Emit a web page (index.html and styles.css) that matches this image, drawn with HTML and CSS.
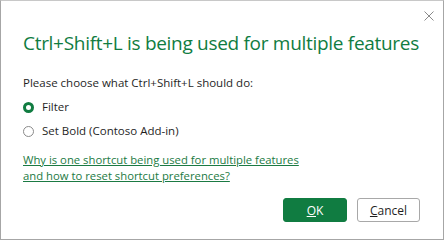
FILE: index.html
```html
<!DOCTYPE html>
<html lang="en">
<head>
  <meta charset="UTF-8" />
  <title>Shortcut conflict</title>
  <link rel="stylesheet" href="styles.css">
</head>
<body>
  <div class="dialog">
    <div class="titlebar">
      <button class="close-btn" aria-label="Close">
        <svg viewBox="0 0 10 10" width="10" height="10">
          <path d="M0.5 0.5 L9.5 9.5 M9.5 0.5 L0.5 9.5" stroke="#8a8a8a" stroke-width="1" fill="none"/>
        </svg>
      </button>
    </div>

    <h1 class="title">Ctrl+Shift+L is being used for multiple features</h1>

    <p class="prompt">Please choose what Ctrl+Shift+L should do:</p>

    <div class="options">
      <label class="option">
        <input type="radio" name="action" checked>
        <span class="radio"></span>
        Filter
      </label>
      <label class="option">
        <input type="radio" name="action">
        <span class="radio"></span>
        Set Bold (Contoso Add-in)
      </label>
    </div>

    <a class="help-link" href="#">Why is one shortcut being used for multiple features<br>and how to reset shortcut preferences?</a>

    <div class="actions">
      <button class="btn btn-primary"><u>O</u>K</button>
      <button class="btn"><u>C</u>ancel</button>
    </div>
  </div>
</body>
</html>
```

FILE: styles.css
```css
:root {
  --green: #107c41;
  --link: #1b7a43;
  --text: #1f1f1f;
  --border: #a6a6a6;
}

* {
  box-sizing: border-box;
  margin: 0;
  padding: 0;
}

html, body {
  width: 100%;
  height: 100%;
  background: #fff;
}

body {
  font-family: 'Open Sans', 'Noto Sans', sans-serif;
  color: var(--text);
}

.dialog {
  width: 444px;
  height: 240px;
  border: 1px solid var(--border);
  border-top-color: #c8c8c8;
  display: flex;
  flex-direction: column;
  padding: 0 23px 0 22px;
}

.titlebar {
  display: flex;
  justify-content: flex-end;
  padding-top: 10px;
  margin-right: -14px;
}

.close-btn {
  border: none;
  background: none;
  width: 10px;
  height: 10px;
  display: flex;
}

.title {
  font-size: 19px;
  font-weight: 400;
  color: var(--green);
  letter-spacing: -0.3px;
  line-height: 26px;
  margin-top: 9px;
}

.prompt {
  font-size: 11.5px;
  line-height: 16px;
  margin-top: 19px;
}

.options {
  display: flex;
  flex-direction: column;
  gap: 8px;
  margin-top: 8px;
}

.option {
  display: flex;
  align-items: center;
  gap: 8px;
  font-size: 11.5px;
  line-height: 16px;
}

.option input {
  display: none;
}

.radio {
  width: 11px;
  height: 11px;
  border-radius: 50%;
  border: 1px solid #8a8a8a;
}

.option input:checked + .radio {
  border: 3px solid var(--green);
}

.help-link {
  margin-top: 13px;
  font-size: 11.3px;
  line-height: 16px;
  color: var(--link);
  text-decoration: underline;
}

.actions {
  display: flex;
  justify-content: flex-end;
  gap: 10px;
  margin-top: 14px;
}

.btn {
  width: 63px;
  height: 24px;
  border-radius: 3px;
  border: 1px solid #a8a8a8;
  background: #fff;
  font-family: inherit;
  font-size: 12px;
  color: var(--text);
}

.btn-primary {
  width: 64px;
  background: var(--green);
  border-color: var(--green);
  color: #fff;
}
```
